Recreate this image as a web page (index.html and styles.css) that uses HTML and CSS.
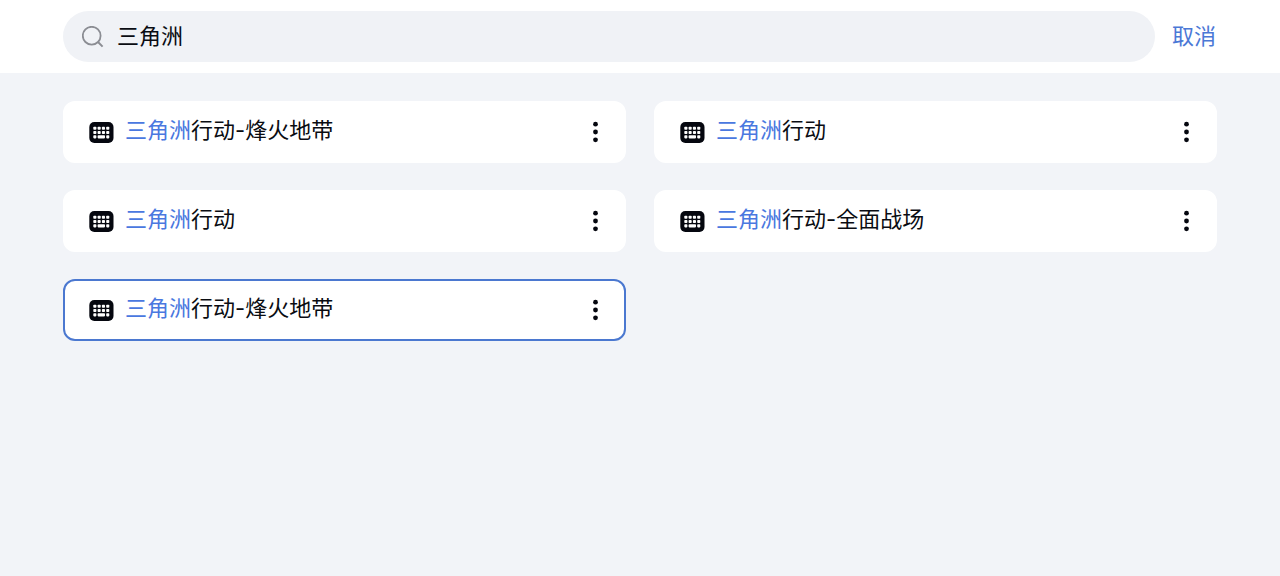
FILE: index.html
```html
<!DOCTYPE html>
<html lang="zh-CN">
<head>
    <meta charset="UTF-8">
    <meta name="viewport" content="width=device-width, initial-scale=1.0">
    <title>搜索</title>
    <link rel="stylesheet" href="styles.css">
</head>
<body>
    <svg class="sprite" aria-hidden="true">
        <symbol id="keyboard" viewBox="0 0 25 21">
            <rect x=".3" width="24.2" height="21" rx="5" fill="#05070f"/>
            <g fill="#fff">
                <rect x="4.3" y="4.7" width="3.1" height="3.1" rx=".8"/>
                <rect x="8.6" y="4.7" width="3.1" height="3.1" rx=".8"/>
                <rect x="12.9" y="4.7" width="3.1" height="3.1" rx=".8"/>
                <rect x="17.2" y="4.7" width="3.1" height="3.1" rx=".8"/>
                <rect x="4.3" y="9" width="3.1" height="3.1" rx=".8"/>
                <rect x="8.6" y="9" width="3.1" height="3.1" rx=".8"/>
                <rect x="12.9" y="9" width="3.1" height="3.1" rx=".8"/>
                <rect x="17.2" y="9" width="3.1" height="3.1" rx=".8"/>
                <rect x="4.3" y="13.3" width="3.1" height="3.1" rx=".8"/>
                <rect x="8.6" y="13.3" width="7.4" height="3.1" rx=".8"/>
                <rect x="17.2" y="13.3" width="3.1" height="3.1" rx=".8"/>
            </g>
        </symbol>
        <symbol id="dots" viewBox="0 0 6 22">
            <circle cx="3.5" cy="3.2" r="2.4"/>
            <circle cx="3.5" cy="11" r="2.4"/>
            <circle cx="3.5" cy="18.8" r="2.4"/>
        </symbol>
    </svg>

    <form class="header" role="search">
        <div class="search">
            <svg class="search-icon" viewBox="0 0 22 22" aria-hidden="true">
                <circle cx="9.7" cy="9.7" r="8.9" fill="none" stroke="#8b8d93" stroke-width="1.8"/>
                <path d="M16 16 20.6 20.6" stroke="#8b8d93" stroke-width="2"/>
            </svg>
            <input type="text" class="search-input" aria-label="搜索" value="三角洲">
        </div>
        <button type="button" class="cancel">取消</button>
    </form>

    <ul class="results">
        <li class="card">
            <svg class="keyboard"><use href="#keyboard"/></svg>
            <span class="name"><mark>三角洲</mark>行动-烽火地带</span>
            <button type="button" class="more" aria-label="更多"><svg class="dots"><use href="#dots"/></svg></button>
        </li>
        <li class="card">
            <svg class="keyboard"><use href="#keyboard"/></svg>
            <span class="name"><mark>三角洲</mark>行动</span>
            <button type="button" class="more" aria-label="更多"><svg class="dots"><use href="#dots"/></svg></button>
        </li>
        <li class="card">
            <svg class="keyboard"><use href="#keyboard"/></svg>
            <span class="name"><mark>三角洲</mark>行动</span>
            <button type="button" class="more" aria-label="更多"><svg class="dots"><use href="#dots"/></svg></button>
        </li>
        <li class="card">
            <svg class="keyboard"><use href="#keyboard"/></svg>
            <span class="name"><mark>三角洲</mark>行动-全面战场</span>
            <button type="button" class="more" aria-label="更多"><svg class="dots"><use href="#dots"/></svg></button>
        </li>
        <li class="card selected">
            <svg class="keyboard"><use href="#keyboard"/></svg>
            <span class="name"><mark>三角洲</mark>行动-烽火地带</span>
            <button type="button" class="more" aria-label="更多"><svg class="dots"><use href="#dots"/></svg></button>
        </li>
    </ul>
</body>
</html>
```
FILE: styles.css
```css
* {
    box-sizing: border-box;
}

body {
    margin: 0;
    background-color: #f2f4f8;
    color: #0a0c12;
    font-family: Inter, "Noto Sans CJK SC", sans-serif;
    font-size: 22px;
    line-height: 32px;
}

button,
input {
    padding: 0;
    border: none;
    background: none;
    color: inherit;
    font: inherit;
}

button {
    cursor: pointer;
}

.sprite {
    display: none;
}

.header {
    display: flex;
    align-items: center;
    gap: 17px;
    padding: 11px 64px 11px 63px;
    background-color: #fff;
}

.search {
    display: flex;
    flex: 1;
    align-items: center;
    gap: 13px;
    height: 51px;
    padding: 0 19px;
    border-radius: 26px;
    background-color: #f0f2f6;
}

.search-icon {
    width: 22px;
    height: 22px;
}

.search-input {
    flex: 1;
    min-width: 0;
    padding-bottom: 2px;
    outline: none;
}

.cancel {
    padding-bottom: 2px;
    color: #4b78d6;
}

.results {
    display: grid;
    grid-template-columns: 1fr 1fr;
    gap: 27px 28px;
    margin: 0;
    padding: 28px 63px;
    list-style: none;
}

.card {
    display: flex;
    align-items: center;
    gap: 11px;
    height: 62px;
    padding: 0 20px 0 24px;
    border: 2px solid #fff;
    border-radius: 12px;
    background-color: #fff;
}

.selected {
    border-color: #4b78d0;
}

.keyboard {
    width: 25px;
    height: 21px;
}

.name {
    flex: 1;
    padding-bottom: 4px;
}

.name mark {
    background: none;
    color: #4a78e0;
}

.more {
    display: flex;
    justify-content: center;
    width: 18px;
}

.dots {
    width: 6px;
    height: 22px;
    fill: #05070f;
}
```
